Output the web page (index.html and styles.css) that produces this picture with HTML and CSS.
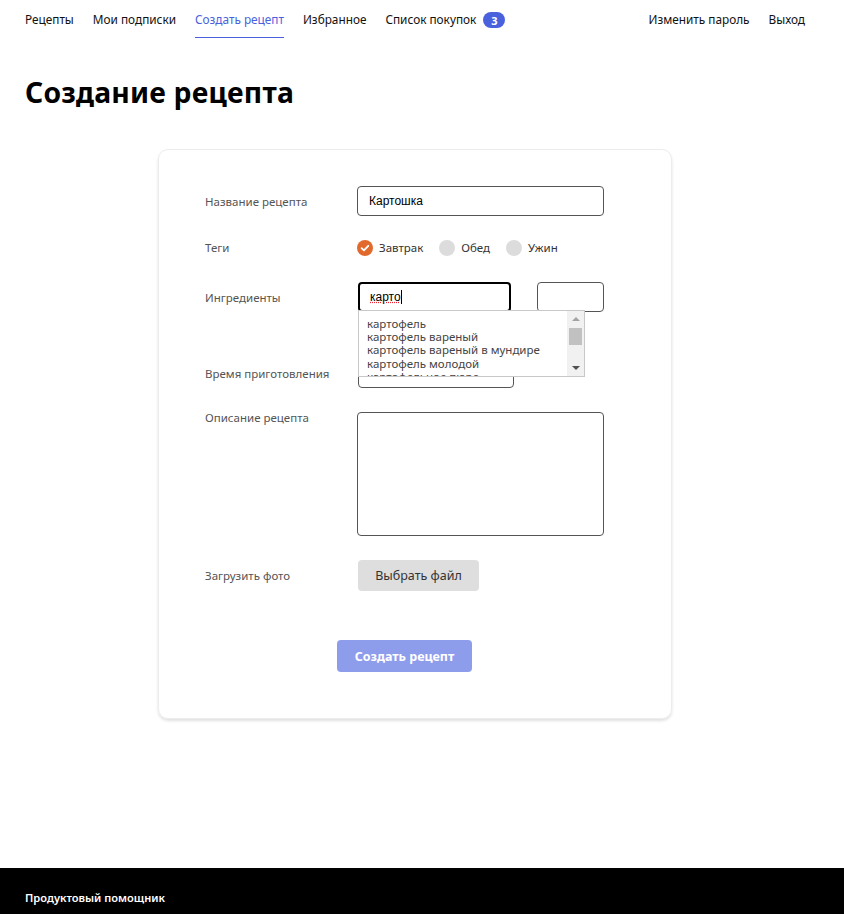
FILE: index.html
```html
<!DOCTYPE html>
<html lang="ru">
<head>
<meta charset="utf-8">
<title>Создание рецепта</title>
<link rel="stylesheet" href="styles.css">
</head>
<body>
<div class="page">
  <header class="nav">
    <nav class="nav-group">
      <a class="nav-link">Рецепты</a>
      <a class="nav-link">Мои подписки</a>
      <a class="nav-link nav-link-active">Создать рецепт</a>
      <a class="nav-link">Избранное</a>
      <a class="nav-link">Список покупок <span class="badge">3</span></a>
    </nav>
    <nav class="nav-group">
      <a class="nav-link">Изменить пароль</a>
      <a class="nav-link">Выход</a>
    </nav>
  </header>

  <main class="main">
    <h1 class="title">Создание рецепта</h1>
    <form class="card">
      <div class="row row-name">
        <span class="label">Название рецепта</span>
        <div class="field field-wide">Картошка</div>
      </div>

      <div class="row row-tags">
        <span class="label">Теги</span>
        <div class="tags">
          <span class="tag"><span class="check check-on"><svg viewBox="0 0 16 16" width="16" height="16"><path d="M4.6 8.2l2.3 2.2 4.4-4.6" fill="none" stroke="#fff" stroke-width="1.8" stroke-linecap="round" stroke-linejoin="round"/></svg></span>Завтрак</span>
          <span class="tag"><span class="check"></span>Обед</span>
          <span class="tag"><span class="check"></span>Ужин</span>
        </div>
      </div>

      <div class="row row-ingr">
        <span class="label">Ингредиенты</span>
        <div class="ingr-fields">
          <div class="field field-focus"><span class="typed">карто</span><span class="caret"></span></div>
          <div class="field field-amount"></div>
        </div>
        <div class="suggest">
          <ul class="suggest-list">
            <li>картофель</li>
            <li>картофель вареный</li>
            <li>картофель вареный в мундире</li>
            <li>картофель молодой</li>
            <li>картофельное пюре</li>
          </ul>
          <div class="scrollbar">
            <span class="arrow arrow-up"></span>
            <span class="thumb"></span>
            <span class="arrow arrow-down"></span>
          </div>
        </div>
      </div>

      <div class="row row-time">
        <span class="label">Время приготовления</span>
        <div class="field field-time"></div>
      </div>

      <div class="row row-desc">
        <span class="label label-top">Описание рецепта</span>
        <div class="field field-area"></div>
      </div>

      <div class="row row-file">
        <span class="label">Загрузить фото</span>
        <span class="file-btn">Выбрать файл</span>
      </div>

      <div class="submit-row">
        <span class="submit">Создать рецепт</span>
      </div>
    </form>
  </main>

  <footer class="footer">Продуктовый помощник</footer>
</div>
</body>
</html>
```

FILE: styles.css
```css
* { box-sizing: border-box; }

html, body {
  margin: 0;
  padding: 0;
  background: #fff;
}

body {
  font-family: "Noto Sans", "DejaVu Sans", sans-serif;
  color: #111;
}

.page {
  min-height: 100vh;
  display: flex;
  flex-direction: column;
}

.nav {
  display: flex;
  justify-content: space-between;
  padding: 0 39px 0 25px;
  height: 38px;
}

.nav-group {
  display: flex;
  gap: 19px;
}

.nav-link {
  display: flex;
  align-items: center;
  gap: 7px;
  font-size: 11.8px;
  color: #111;
  height: 38px;
  padding-top: 3px;
  border-bottom: 1px solid transparent;
  line-height: 1;
}

.nav-link-active {
  color: #4a61dd;
  border-bottom: 1px solid #4a61dd;
}

.badge {
  display: inline-flex;
  align-items: center;
  justify-content: center;
  width: 22px;
  height: 16px;
  border-radius: 8px;
  background: #4a61dd;
  color: #fff;
  font-size: 11px;
  font-weight: 700;
}

.main {
  flex: 1;
  padding: 0 25px;
}

.title {
  margin: 39px 0 0;
  font-size: 28.3px;
  font-weight: 700;
  line-height: 30px;
  color: #000;
  letter-spacing: 0.2px;
}

.card {
  width: 514px;
  margin: 42px 0 0 133px;
  padding: 36px 67px 46px 46px;
  border: 1px solid #ececec;
  border-radius: 10px;
  box-shadow: 0 2px 3px rgba(0, 0, 0, 0.12);
  display: flex;
  flex-direction: column;
}

.row {
  display: flex;
  align-items: center;
  position: relative;
}

.label {
  width: 152px;
  flex: none;
  font-size: 11.5px;
  color: #555;
}

.label-top {
  align-self: flex-start;
  line-height: 12px;
}

.field {
  height: 30px;
  border: 1px solid #555;
  border-radius: 4px;
  background: #fff;
  font-family: "Liberation Sans", Arial, sans-serif;
  font-size: 12px;
  color: #000;
  display: flex;
  align-items: center;
  padding: 0 11px;
}

.field-wide { width: 247px; }

.row-tags { margin-top: 23px; height: 17px; }

.tags {
  display: flex;
  gap: 16px;
}

.tag {
  display: flex;
  align-items: center;
  gap: 6px;
  font-size: 11.5px;
  color: #333;
}

.check {
  width: 16px;
  height: 16px;
  border-radius: 50%;
  background: #dcdcdc;
  display: block;
}

.check svg { display: block; }

.check-on { background: #e2692c; }

.row-ingr { margin-top: 26px; }

.ingr-fields {
  display: flex;
  gap: 26px;
  margin-left: 1px;
}

.field-focus {
  width: 153px;
  border: 2px solid #000;
  border-radius: 4px;
  padding: 0 10px;
}

.typed {
  text-decoration: underline;
  text-decoration-color: #e23;
  text-decoration-style: dotted;
}

.caret {
  display: inline-block;
  width: 1px;
  height: 14px;
  background: #000;
}

.field-amount { width: 67px; }

.suggest {
  position: absolute;
  left: 153px;
  top: 28px;
  width: 227px;
  height: 67px;
  background: #fff;
  border: 1px solid #c8c8c8;
  z-index: 2;
  overflow: hidden;
  display: flex;
}

.suggest-list {
  list-style: none;
  margin: 0;
  padding: 6px 0 0 8px;
  flex: 1;
  font-size: 11.5px;
  line-height: 13.2px;
  color: #444;
}

.scrollbar {
  width: 17px;
  flex: none;
  background: #f1f1f1;
  position: relative;
}

.arrow {
  position: absolute;
  left: 5px;
  width: 0;
  height: 0;
  border-left: 4px solid transparent;
  border-right: 4px solid transparent;
}

.arrow-up { top: 6px; border-bottom: 4px solid #a3a3a3; }
.arrow-down { bottom: 6px; border-top: 4px solid #505050; }

.thumb {
  position: absolute;
  left: 2px;
  top: 17px;
  width: 13px;
  height: 17px;
  background: #c1c1c1;
}

.row-time { margin-top: 46px; }

.field-time {
  width: 156px;
  margin-left: 1px;
}

.row-desc { margin-top: 24px; }

.field-area {
  width: 247px;
  height: 124px;
}

.row-file { margin-top: 24px; }

.file-btn {
  width: 121px;
  height: 31px;
  margin-left: 1px;
  border-radius: 4px;
  background: #dedede;
  color: #333;
  font-size: 12.5px;
  display: flex;
  align-items: center;
  justify-content: center;
}

.submit-row {
  margin-top: 49px;
  display: flex;
  padding-left: 132px;
}

.submit {
  width: 135px;
  height: 32px;
  border-radius: 4px;
  background: #8e9cec;
  color: #fff;
  font-size: 12.5px;
  font-weight: 700;
  display: flex;
  align-items: center;
  justify-content: center;
}

.footer {
  height: 46px;
  background: #000;
  color: #fff;
  font-size: 11.1px;
  font-weight: 600;
  padding: 12px 25px 0;
  display: flex;
  align-items: center;
}
```
